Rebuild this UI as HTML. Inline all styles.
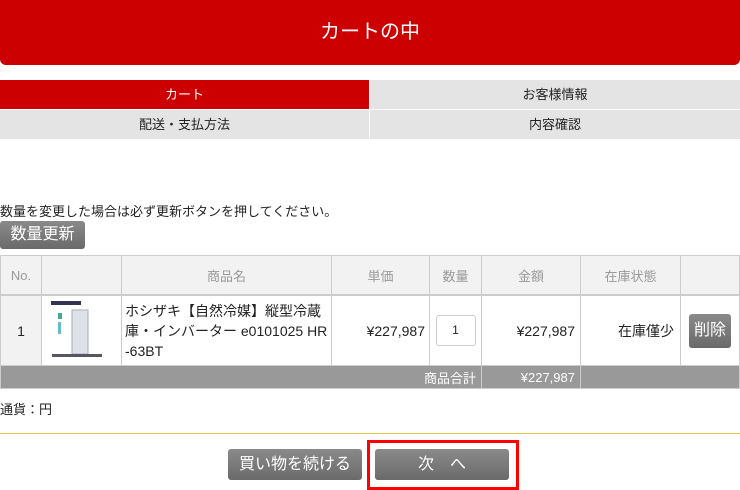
<!DOCTYPE html><html><head><meta charset="utf-8"><style>
body{margin:0;width:740px;height:490px;overflow:hidden;background:#fff;font-family:"Liberation Sans","Noto Sans CJK JP",sans-serif;font-size:13px;color:#222;position:relative}
.a{position:absolute}
.hd{left:0;top:0;width:740px;height:65px;background:#cc0000;border-radius:0 0 6px 6px;color:#fff;font-size:20px;text-align:center;line-height:64px}
.tab{position:absolute;height:29px;line-height:29px;text-align:center;font-size:13px;background:#e4e4e4;color:#222}
table{position:absolute;left:0;top:255px;border-collapse:collapse;width:740px}
td{border:1px solid #ccc;padding:0}
.th td{background:#f2f2f2;color:#999;text-align:center;height:38px;border-bottom:2px solid #ccc}
.btn{position:absolute;background:linear-gradient(#8a8a8a,#6a6a6a);color:#fff;border-radius:3px;text-align:center}
</style></head><body>
<div class="a hd">カートの中</div>
<div class="tab" style="left:0;top:80px;width:369px;background:#cc0000;color:#fff">カート</div>
<div class="tab" style="left:370px;top:80px;width:370px">お客様情報</div>
<div class="tab" style="left:0;top:110px;width:369px">配送・支払方法</div>
<div class="tab" style="left:370px;top:110px;width:370px">内容確認</div>
<div class="a" style="left:0;top:201px">数量を変更した場合は必ず更新ボタンを押してください。</div>
<div class="btn" style="left:0;top:221px;width:85px;height:28px;line-height:28px;font-size:16px">数量更新</div>
<table>
<tr class="th"><td style="width:40px">No.</td><td style="width:79px"></td><td style="width:209px">商品名</td><td style="width:97px">単価</td><td style="width:51px">数量</td><td style="width:98px">金額</td><td style="width:99px">在庫状態</td><td></td></tr>
<tr style="height:66px"><td style="background:#f2f2f2;text-align:center;font-size:14px">1</td>
<td><svg width="79" height="66"><rect x="9" y="5" width="30" height="4" fill="#335"/><rect x="30" y="14" width="16" height="44" fill="#dde2e8" stroke="#aab"/><rect x="16" y="17" width="4" height="6" fill="#4a8"/><rect x="16" y="26" width="3" height="12" fill="#6bc"/><rect x="10" y="58" width="50" height="3" fill="#556"/></svg></td>
<td style="padding:0 3px;font-size:14px;line-height:20px;word-break:break-all">ホシザキ【自然冷媒】縦型冷蔵庫・インバーター e0101025 HR-63BT</td>
<td style="text-align:right;padding-right:4px;font-size:14px">¥227,987</td>
<td style="text-align:center"><div style="display:inline-block;width:38px;height:29px;border:1px solid #ccc;border-radius:3px;line-height:29px;font-size:12px">1</div></td>
<td style="text-align:right;padding-right:5px;font-size:14px">¥227,987</td>
<td style="text-align:right;padding-right:6px;font-size:14px">在庫僅少</td>
<td style="text-align:center"><div style="display:inline-block;width:42px;height:34px;line-height:34px;background:linear-gradient(#8a8a8a,#6a6a6a);color:#fff;border-radius:3px;font-size:16px">削除</div></td></tr>
<tr style="height:23px;background:#999;color:#fff"><td colspan="5" style="text-align:right;padding-right:5px;border-color:#ccc">商品合計</td><td style="text-align:right;padding-right:5px">¥227,987</td><td colspan="2"></td></tr>
</table>
<div class="a" style="left:0;top:399px;font-size:13px">通貨：円</div>
<div class="a" style="left:0;top:433px;width:740px;height:1px;background:#e6c84a"></div>
<div class="btn" style="left:228px;top:449px;width:134px;height:31px;line-height:31px;font-size:16px">買い物を続ける</div>
<div class="a" style="left:367px;top:440px;width:146px;height:44px;border:3px solid #f00"></div>
<div class="btn" style="left:375px;top:449px;width:134px;height:31px;line-height:31px;font-size:16px;word-spacing:0">次　へ</div>
</body></html>
